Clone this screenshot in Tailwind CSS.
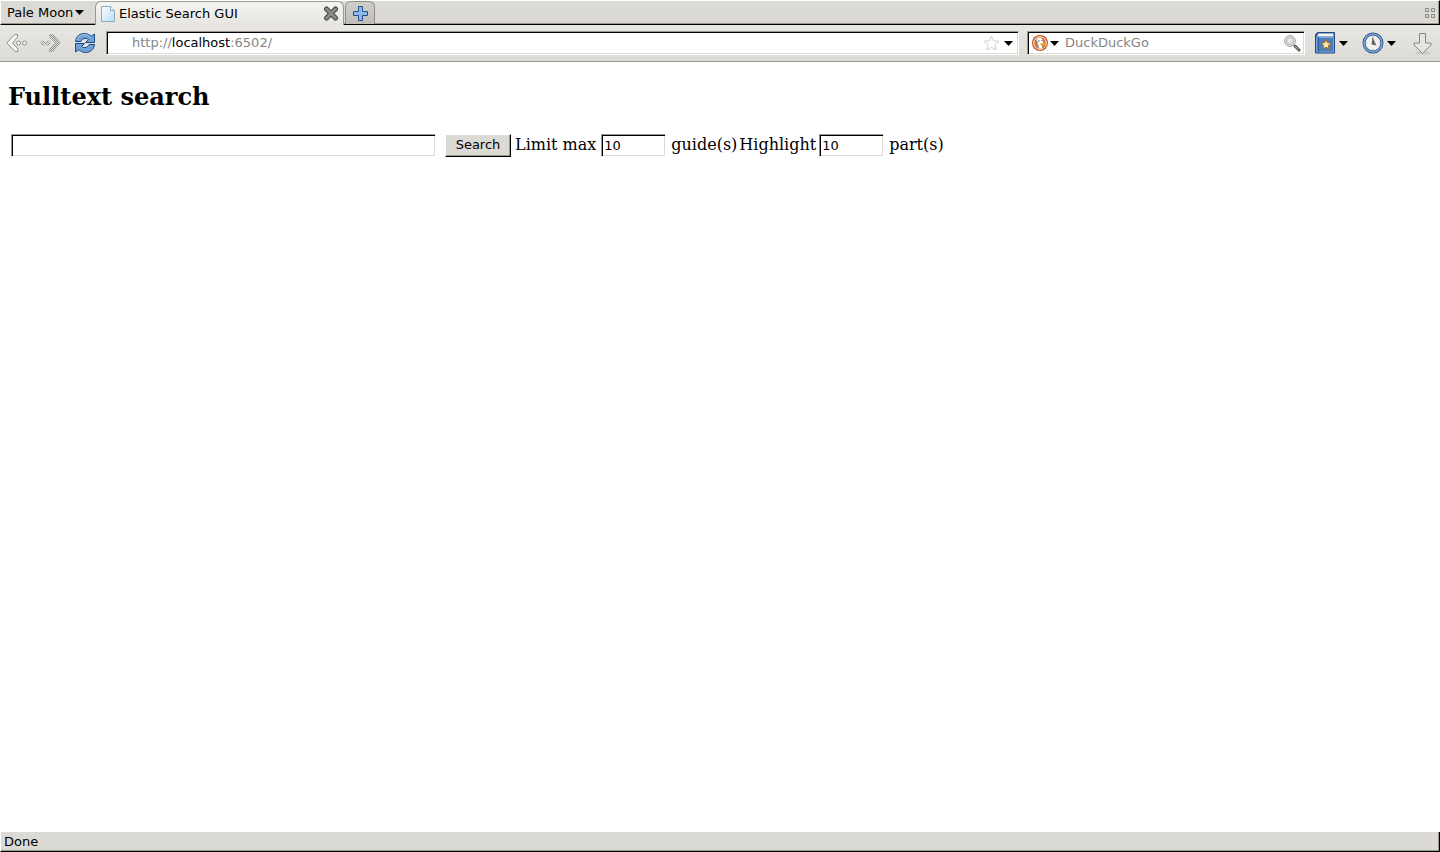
<!DOCTYPE html>
<html lang="en">
<head>
  <meta charset="UTF-8" />
  <meta name="viewport" content="width=device-width, initial-scale=1.0" />
  <title>Elastic Search GUI</title>
  <script src="https://cdn.jsdelivr.net/npm/@tailwindcss/browser@4"></script>
</head>
<body class="flex flex-col min-h-screen bg-white text-black text-[13px] leading-4 font-['DejaVu_Sans',sans-serif]">

  <!-- Tab bar -->
  <header class="flex h-[25px] bg-[#dcdad5] border-t border-t-white border-l border-l-white border-r border-r-black border-b border-b-black shadow-[inset_-1px_-1px_#9a988f]">
    <button class="flex items-center w-[94px] pl-1.5 gap-0.5">
      Pale Moon
      <svg class="w-[9px] h-[5px]" viewBox="0 0 9 5"><path d="M0 0h9L4.500 5z" /></svg>
    </button>
    <div class="flex items-center w-[249px] h-6 -mb-px pl-1 pr-1 bg-linear-to-b from-[#f4f4f2] to-[#e6e5e1] border border-b-0 border-[#9a988f] rounded-t-md">
      <svg class="w-4 h-4 mr-[3px]" viewBox="0 0 16 16">
        <defs><linearGradient id="page" x1="0" y1="0" x2="1" y2="1"><stop stop-color="#fff" /><stop offset="1" stop-color="#b5ddf3" /></linearGradient></defs>
        <path d="M1.500.500h9l4 4v11h-13z" fill="url(#page)" stroke="#8eabbd" />
        <path d="M10.500.500v4h4" fill="#e9f6fd" stroke="#8eabbd" />
      </svg>
      <span>Elastic Search GUI</span>
      <button class="ml-auto" aria-label="Close tab">
        <svg class="w-4 h-4" viewBox="0 0 16 16">
          <path d="M3.500 3l9 9M12.500 3l-9 9" fill="none" stroke="#484844" stroke-width="5" stroke-linecap="round" />
          <path d="M3.500 3l9 9M12.500 3l-9 9" fill="none" stroke="#8b8b84" stroke-width="3" stroke-linecap="round" />
        </svg>
      </button>
    </div>
    <button class="flex items-center justify-center w-[30px] h-[23px] ml-px bg-linear-to-b from-[#d0cfca] to-[#bebdb9] border border-b-0 border-[#8f8d86] rounded-t-md" aria-label="New tab">
      <svg class="w-[15px] h-[15px]" viewBox="0 0 15 15"><path d="M5.500.500h4v5h5v4h-5v5h-4v-5h-5v-4h5z" fill="#8db9e8" stroke="#234e91" stroke-linejoin="round" /></svg>
    </button>
    <button class="ml-auto mr-1 flex items-center" aria-label="Tab groups">
      <svg class="w-[10px] h-[10px]" viewBox="0 0 10 10"><path d="M.500.500h3v3h-3zM6.500.500h3v3h-3zM.500 6.500h3v3h-3zM6.500 6.500h3v3h-3z" fill="none" stroke="#85847f" /></svg>
    </button>
  </header>

  <!-- Navigation bar -->
  <nav class="flex items-center h-[37px] px-1.5 bg-linear-to-b from-[#e8e7e3] to-[#dcdad5] border-b border-[#9a988f]">
    <button aria-label="Back">
      <svg class="w-[22px] h-[22px]" viewBox="0 0 22 22" fill="#f5f5f3" stroke="#8f8f8b">
        <path d="M8.500 2.500h3v2.500L6.500 11l5.500 6v2.500H9L.800 11z" stroke-linejoin="round" />
        <circle cx="12.500" cy="11" r="2" /><circle cx="18.500" cy="11" r="2" />
      </svg>
    </button>
    <button class="ml-3" aria-label="Forward">
      <svg class="w-[22px] h-[22px]" viewBox="0 0 22 22">
        <defs><pattern id="dots" width="2" height="2" patternUnits="userSpaceOnUse"><path d="M0 0h1v1H0zM1 1h1v1H1z" fill="#8b8b87" shape-rendering="crispEdges" /></pattern></defs>
        <path d="M9 2h4l8 9-8 9H9v-3l6-6-6-6zM3 8l3 3-3 3-3-3zM8 8l3 3-3 3-3-3z" fill="url(#dots)" />
        <path d="M3 10l1 1-1 1-1-1zM8 10l1 1-1 1-1-1z" fill="#e3e2de" />
      </svg>
    </button>
    <button class="ml-3" aria-label="Reload">
      <svg class="w-[22px] h-[22px]" viewBox="0 0 22 22" fill="#6fa1d9" stroke="#204a87" stroke-linejoin="round">
        <path d="M1.500 9.500C2 4 6 1.500 10.500 1.500c3 0 5 1.200 6.500 2.800L20.500 2v8.500H11.500l3-3C11.500 5.500 8 6.500 7 9.500z" />
        <path d="M20.500 12.500c-.500 5.500-4.500 8-9 8-3 0-5-1.200-6.500-2.800L1.500 20v-8.500h9l-3 3c3 2 6.500 1 7.500-2z" />
        <path d="M3 8c1-3.500 4-5.300 7.500-5.300 3 0 5 1.500 6.500 3" fill="none" stroke="#a9c9ec" />
      </svg>
    </button>

    <div class="flex-1 flex items-center h-6 ml-2.5 pr-[5px] bg-white border border-t-[#9a988f] border-l-[#9a988f] border-b-white border-r-white shadow-[inset_1px_1px_#000,inset_-1px_-1px_#dcdad5]">
      <a href="#" class="flex-1 pl-[25px] text-[#858585]">http://<span class="text-black">localhost</span>:6502/</a>
      <button aria-label="Bookmark this page">
        <svg class="w-[17px] h-4" viewBox="0 0 17 16"><path d="M8.500 1l2.200 4.600 5.100.700-3.700 3.500.900 5-4.500-2.400L4 14.800l.900-5L1.200 6.300l5.100-.700z" fill="#fdfdfd" stroke="#d0d0ce" stroke-linejoin="round" /></svg>
      </button>
      <button class="ml-1" aria-label="Show history">
        <svg class="w-[9px] h-[5px]" viewBox="0 0 9 5"><path d="M0 0h9L4.500 5z" /></svg>
      </button>
    </div>

    <div class="flex items-center w-[278px] h-6 ml-2 pl-1 pr-[3px] bg-white border border-t-[#9a988f] border-l-[#9a988f] border-b-white border-r-white shadow-[inset_1px_1px_#000,inset_-1px_-1px_#dcdad5]">
      <button class="flex items-center gap-0.5" aria-label="Search engine">
        <svg class="w-4 h-4" viewBox="0 0 16 16">
          <circle cx="8" cy="8" r="8" fill="#bf5113" />
          <circle cx="8" cy="8" r="6.300" fill="#d9702f" stroke="#fff" />
          <path d="M4.500 4.500C5 2.500 9.500 2 10.500 4.500l.800 3.500-1.300 2 .500 3.500H7z" fill="#fff" />
          <path d="M4.500 4.500L7 13.500" stroke="#9fb4c2" />
          <path d="M8.500 8h4.500l-1 2-3.500.500z" fill="#eeb02c" />
          <path d="M6 6h1.500M9.500 5.500h1" stroke="#35536e" />
          <path d="M9.500 12l2.500-1v2.500z" fill="#65a34a" />
        </svg>
        <svg class="w-[9px] h-[5px]" viewBox="0 0 9 5"><path d="M0 0h9L4.500 5z" /></svg>
      </button>
      <input type="text" placeholder="DuckDuckGo" aria-label="Web search" class="flex-1 min-w-0 pl-1.5 outline-none placeholder:text-[#858585]" />
      <button aria-label="Go">
        <svg class="w-[17px] h-[17px]" viewBox="0 0 17 17">
          <path d="M11 11l4 4" stroke="#555" stroke-width="3" stroke-linecap="round" />
          <path d="M11 11l3.500 3.500" stroke="#b5b5b5" />
          <circle cx="6" cy="6" r="5.300" fill="#fff" stroke="#8d8d89" />
          <circle cx="6" cy="6" r="3.500" fill="#e3e3e1" stroke="#a9a9a5" />
          <path d="M4.500 6.500c0-1.500 1-2.300 2.500-2.300" fill="none" stroke="#fff" />
        </svg>
      </button>
    </div>

    <button class="flex items-center gap-[3px] ml-2.5" aria-label="Bookmarks">
      <svg class="w-[21px] h-[22px]" viewBox="0 0 21 22">
        <path d="M2.500.500h17v20.500H.500V2.500z" fill="#3465a4" stroke="#204a87" stroke-linejoin="round" />
        <path d="M3.500 1.500h15v3H2z" fill="#f4f4f2" />
        <path d="M1.500 5.500h17v14.500h-17z" fill="#4a7fbf" stroke="#7ca6d8" />
        <path d="M3.500 5v16" stroke="#2d5d9c" />
        <path d="M11 7.500l1.500 3.200 3.500.400-2.600 2.400.700 3.500-3.100-1.700-3.100 1.700.700-3.500L6 11.100l3.500-.400z" fill="#fce9b8" stroke="#b9660d" stroke-linejoin="round" />
      </svg>
      <svg class="w-[9px] h-[5px]" viewBox="0 0 9 5"><path d="M0 0h9L4.500 5z" /></svg>
    </button>
    <button class="flex items-center gap-[3px] ml-3.5" aria-label="History">
      <svg class="w-[22px] h-[22px]" viewBox="0 0 22 22">
        <circle cx="11" cy="11" r="9" fill="#f1f1ef" stroke="#204a87" stroke-width="3" />
        <circle cx="11" cy="11" r="9" fill="none" stroke="#78a5d8" stroke-width="1.600" />
        <path d="M11 3.500v1.500M11 17v1.500M3.500 11H5M17 11h1.500" stroke="#aaa" />
        <path d="M10.500 4.500L9.500 12.500l5 1-1.500-3z" fill="#666862" />
      </svg>
      <svg class="w-[9px] h-[5px]" viewBox="0 0 9 5"><path d="M0 0h9L4.500 5z" /></svg>
    </button>
    <button class="ml-4" aria-label="Downloads">
      <svg class="w-[22px] h-[23px]" viewBox="0 0 22 23">
        <ellipse cx="11" cy="21" rx="8" ry="1.500" fill="#c9c8c3" />
        <path d="M7.500 1.500h6v9.500h5.500v2L10.500 21.500 2 13v-2h5.500z" fill="#e4e4e1" stroke="#888884" stroke-linejoin="round" />
      </svg>
    </button>
  </nav>

  <!-- Page -->
  <main class="flex-1 px-2 pt-[21px] font-['DejaVu_Serif',serif] text-base">
    <h1 class="text-2xl leading-7 font-bold">Fulltext search</h1>
    <form class="flex items-center mt-[22px] ml-[3px]">
      <input type="text" aria-label="Search query" class="w-[425px] h-[23px] px-1 text-[13px] font-['DejaVu_Sans',sans-serif] outline-none border border-t-[#9a988f] border-l-[#9a988f] border-b-white border-r-white shadow-[inset_1px_1px_#000,inset_-1px_-1px_#dcdad5]" />
      <button type="submit" class="w-[66px] h-[23px] ml-[9px] text-[13px] leading-4 font-['DejaVu_Sans',sans-serif] bg-[#dcdad5] border border-t-white border-l-white border-b-black border-r-black shadow-[inset_-1px_-1px_#9a988f]">Search</button>
      <label for="guides" class="ml-1">Limit max</label>
      <input id="guides" type="text" value="10" class="w-[65px] h-[23px] ml-[5px] px-0.5 text-[13px] font-['DejaVu_Sans',sans-serif] outline-none border border-t-[#9a988f] border-l-[#9a988f] border-b-white border-r-white shadow-[inset_1px_1px_#000,inset_-1px_-1px_#dcdad5]" />
      <span class="ml-[5px]">guide(s)</span>
      <label for="parts" class="ml-0.5">Highlight</label>
      <input id="parts" type="text" value="10" class="w-[65px] h-[23px] ml-[3px] px-0.5 text-[13px] font-['DejaVu_Sans',sans-serif] outline-none border border-t-[#9a988f] border-l-[#9a988f] border-b-white border-r-white shadow-[inset_1px_1px_#000,inset_-1px_-1px_#dcdad5]" />
      <span class="ml-[5px]">part(s)</span>
    </form>
  </main>

  <!-- Status bar -->
  <footer class="flex items-center h-5 pl-[3px] bg-[#dcdad5] border-l border-l-white border-r border-r-black border-b border-b-black shadow-[inset_-1px_-1px_#9a988f]">Done</footer>

</body>
</html>
